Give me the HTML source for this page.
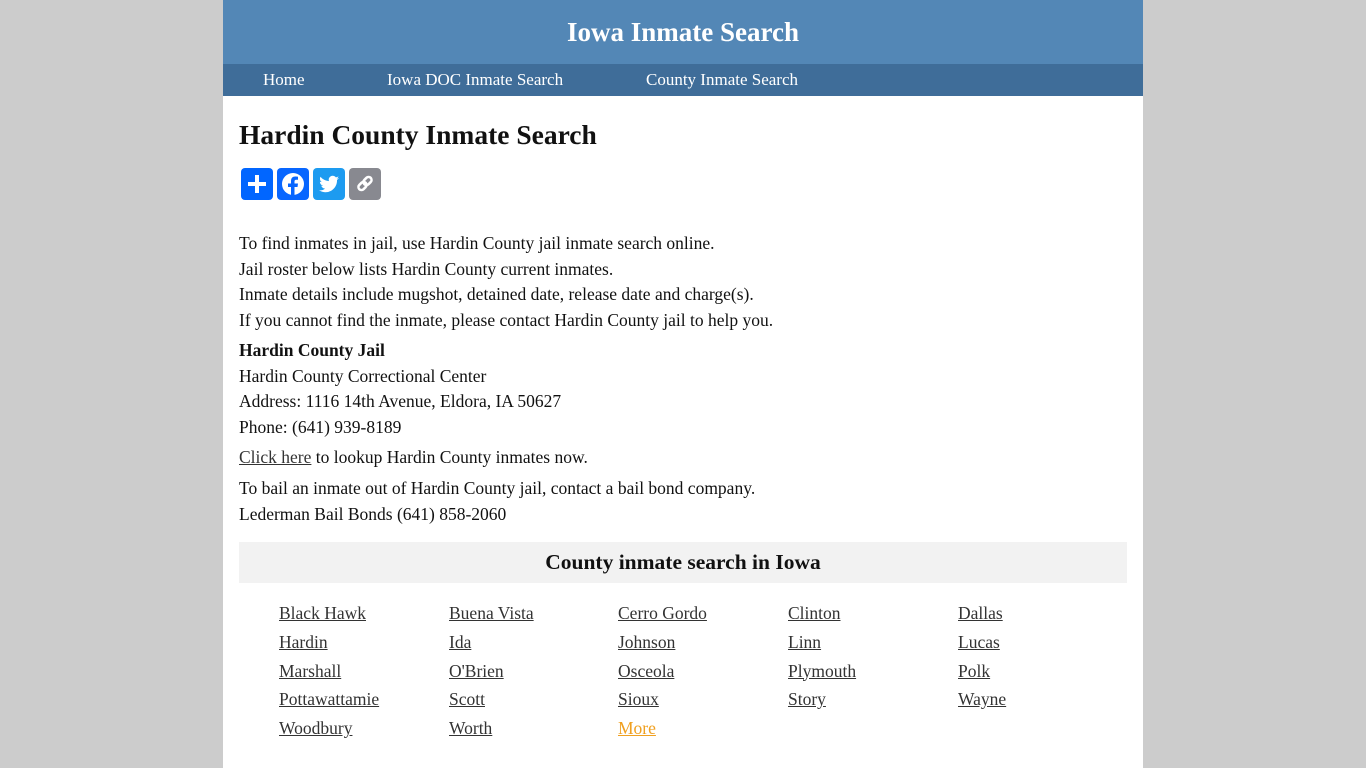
<!DOCTYPE html>
<html><head><meta charset="utf-8"><style>
body{margin:0;background:#ccc;font-family:"Liberation Serif",serif;color:#111}
.wrap{position:absolute;left:223px;top:0;width:920px;height:768px;background:#fff}
.hdr{height:64px;background:#5387b6;color:#fff;text-align:center;font-weight:bold;font-size:27px;line-height:64px}
.nav{height:32px;background:#3f6d99;color:#fff;font-size:17px;line-height:31px;position:relative}
.nav span{position:absolute;top:0}
.t{position:absolute;left:16px;white-space:nowrap;font-size:17.5px}
h1{position:absolute;left:16px;top:117px;margin:0;font-size:27.5px;line-height:36px}
.ic{position:absolute;top:168px;width:32px;height:32px;border-radius:4px}
.band{position:absolute;left:16px;top:542px;width:888px;height:41px;background:#f2f2f2;text-align:center;font-weight:bold;font-size:21.5px;line-height:41px}
a{color:#333}
.g{position:absolute;font-size:17.5px;white-space:nowrap}
</style></head><body><div class="wrap">
<div class="hdr">Iowa Inmate Search</div>
<div class="nav"><span style="left:40px">Home</span><span style="left:164px">Iowa DOC Inmate Search</span><span style="left:423px">County Inmate Search</span></div>
<h1>Hardin County Inmate Search</h1>
<div class="ic" style="left:18px;background:#0166ff"><svg width="32" height="32"><path d="M16 7v18M7 16h18" stroke="#fff" stroke-width="4"/></svg></div>
<div class="ic" style="left:54px;background:#0866ff"><svg width="32" height="32"><circle cx="16" cy="16" r="11" fill="#fff"/><path d="M17.5 28v-9h3l.5-3.5h-3.5v-2c0-1 .4-1.7 1.8-1.7H21V8.7c-.4 0-1.5-.2-2.7-.2-2.7 0-4.3 1.6-4.3 4.5v2.5h-3V19h3v9z" fill="#0866ff"/></svg></div>
<div class="ic" style="left:90px;background:#1d9bf0"><svg width="32" height="32"><path d="M26 10c-.7.3-1.5.5-2.3.6.8-.5 1.5-1.3 1.8-2.2-.8.5-1.7.8-2.6 1a4 4 0 0 0-7 3.7c-3.4-.2-6.4-1.8-8.4-4.3-1 1.8-.5 4.1 1.2 5.3-.6 0-1.3-.2-1.800-.5 0 2 1.4 3.7 3.3 4.1-.6.2-1.2.2-1.9.1.5 1.6 2.1 2.8 3.8 2.8A8.2 8.2 0 0 1 6 22.300 11.6 11.6 0 0 0 24 12c.8-.6 1.5-1.3 2-2z" fill="#fff"/></svg></div>
<div class="ic" style="left:126px;background:#888990"><svg width="32" height="32"><g fill="none" stroke="#fff" stroke-width="2.5"><rect x="9" y="15" width="9" height="6" rx="3" transform="rotate(-45 13.5 18)"/><rect x="14" y="10" width="9" height="6" rx="3" transform="rotate(-45 18.5 13)"/></g></svg></div>
<div class="t" style="top:231px;line-height:25.5px">To find inmates in jail, use Hardin County jail inmate search online.<br>Jail roster below lists Hardin County current inmates.<br>Inmate details include mugshot, detained date, release date and charge(s).<br>If you cannot find the inmate, please contact Hardin County jail to help you.</div>
<div class="t" style="top:338px;line-height:25.7px"><b>Hardin County Jail</b><br>Hardin County Correctional Center<br>Address: 1116 14th Avenue, Eldora, IA 50627<br>Phone: (641) 939-8189</div>
<div class="t" style="top:445px;line-height:24px"><a href="#">Click here</a> to lookup Hardin County inmates now.</div>
<div class="t" style="top:475px;line-height:26px">To bail an inmate out of Hardin County jail, contact a bail bond company.<br>Lederman Bail Bonds (641) 858-2060</div>
<div class="band">County inmate search in Iowa</div>
<div class="g" style="left:56px;top:599px;line-height:28.8px"><a href="#">Black Hawk</a><br><a href="#">Hardin</a><br><a href="#">Marshall</a><br><a href="#">Pottawattamie</a><br><a href="#">Woodbury</a></div>
<div class="g" style="left:226px;top:599px;line-height:28.8px"><a href="#">Buena Vista</a><br><a href="#">Ida</a><br><a href="#">O'Brien</a><br><a href="#">Scott</a><br><a href="#">Worth</a></div>
<div class="g" style="left:395px;top:599px;line-height:28.8px"><a href="#">Cerro Gordo</a><br><a href="#">Johnson</a><br><a href="#">Osceola</a><br><a href="#">Sioux</a><br><a href="#" style="color:#f0a020">More</a></div>
<div class="g" style="left:565px;top:599px;line-height:28.8px"><a href="#">Clinton</a><br><a href="#">Linn</a><br><a href="#">Plymouth</a><br><a href="#">Story</a></div>
<div class="g" style="left:735px;top:599px;line-height:28.8px"><a href="#">Dallas</a><br><a href="#">Lucas</a><br><a href="#">Polk</a><br><a href="#">Wayne</a></div>
</div></body></html>
